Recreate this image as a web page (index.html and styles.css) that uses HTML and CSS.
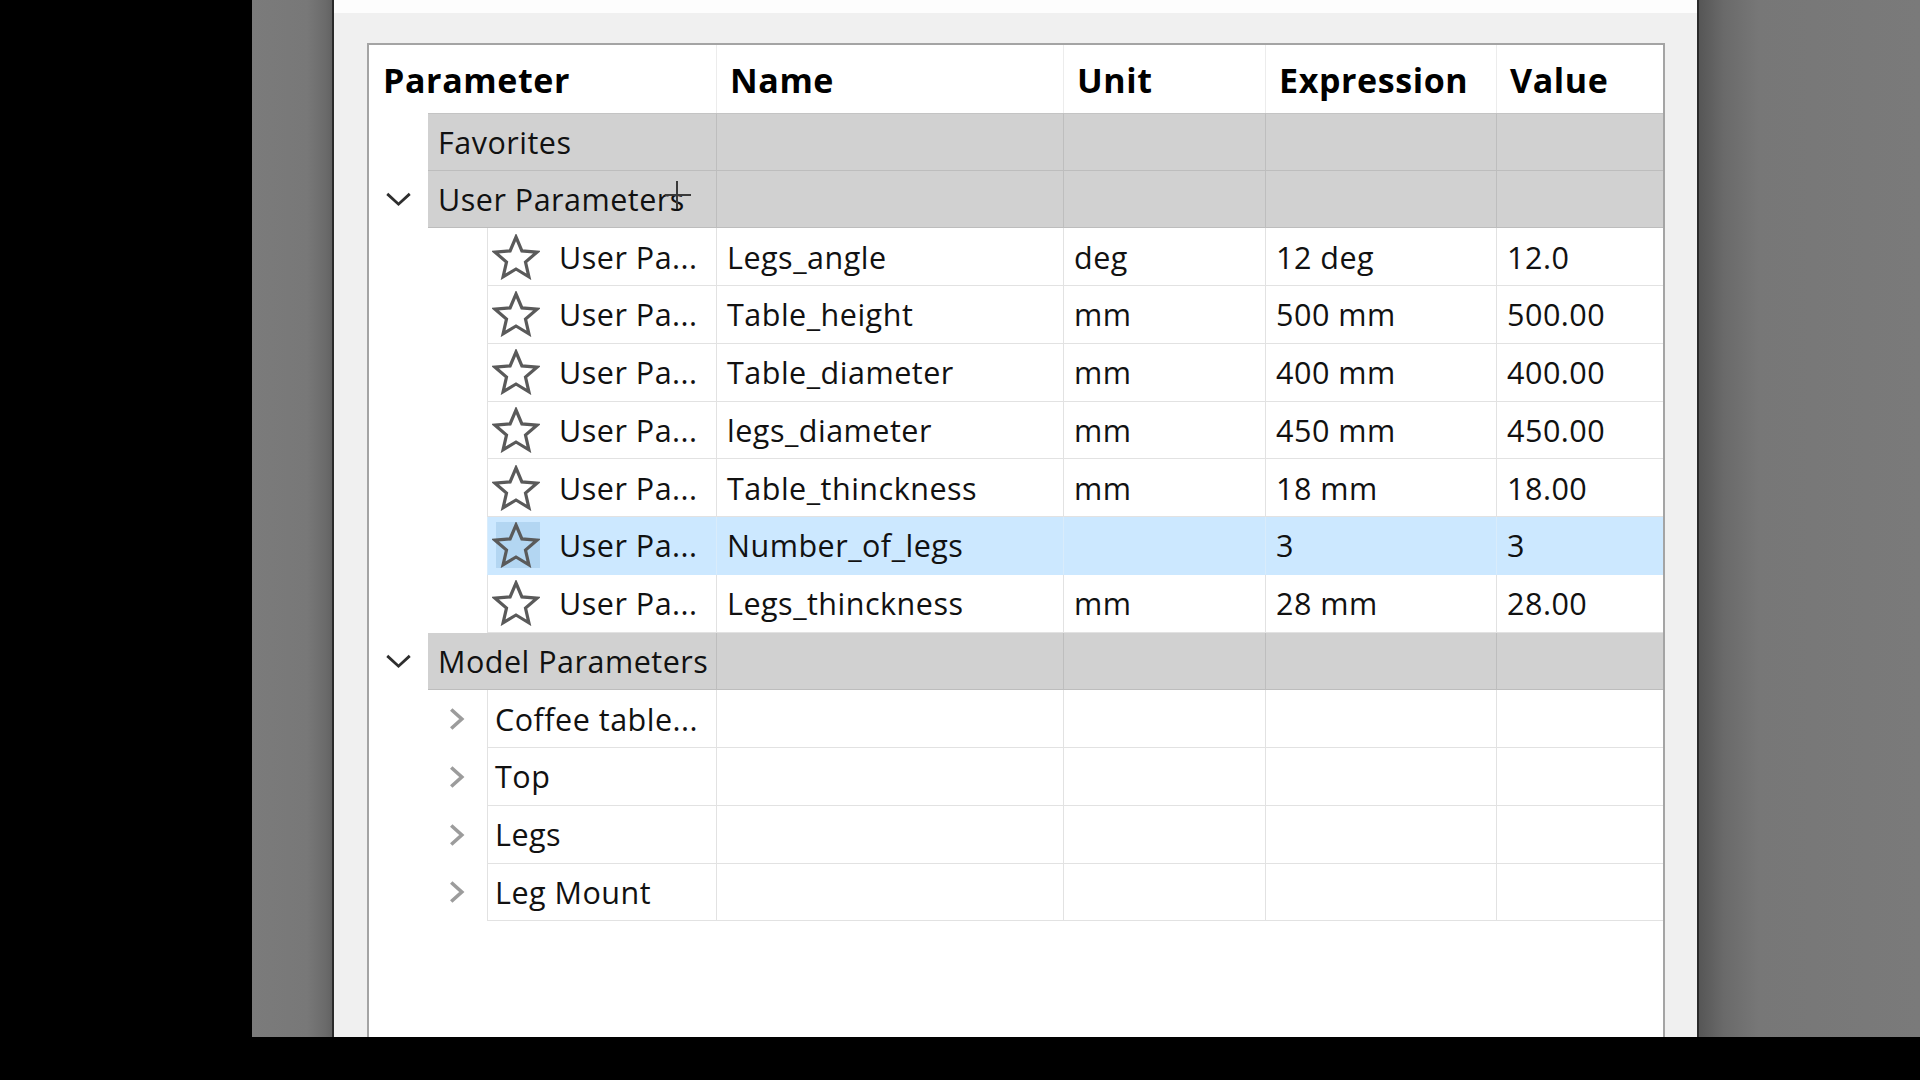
FILE: index.html
```html
<!DOCTYPE html>
<html>
<head>
<meta charset="utf-8">
<link rel="stylesheet" href="styles.css">
</head>
<body>
<div class="screen">
  <div class="stage">
    <div class="gutter-left"></div>
    <div class="window">
      <div class="topband"></div>
      <div class="content">
        <div class="table">
          <div class="row head">
            <div class="cell hc">Parameter</div>
            <div class="cell hc">Name</div>
            <div class="cell hc">Unit</div>
            <div class="cell hc">Expression</div>
            <div class="cell hc">Value</div>
          </div>

          <div class="row group first">
            <div class="tree"><div class="indent-g"></div><div class="glabel">Favorites</div></div>
            <div class="cell g"></div><div class="cell g"></div><div class="cell g"></div><div class="cell g"></div>
          </div>

          <div class="row group">
            <div class="tree">
              <div class="indent-g">
                <svg class="chev-down" viewBox="0 0 28 16"><path d="M2 2 L14 13 L26 2" /></svg>
              </div>
              <div class="glabel">User Parameters<span class="cursor"><span class="cv"></span><span class="ch"></span></span></div>
            </div>
            <div class="cell g"></div><div class="cell g"></div><div class="cell g"></div><div class="cell g"></div>
          </div>

          <div class="row item">
            <div class="tree"><div class="indent-c"></div><div class="clabel"><span class="starbox"><svg class="star" viewBox="0 0 48 46"><polygon points="24,3 29.9,16.9 44.9,18.2 33.5,28.1 36.9,42.8 24,35 11.1,42.8 14.5,28.1 3.1,18.2 18.1,16.9"/></svg></span><span class="ctext">User Pa...</span></div></div>
            <div class="cell">Legs_angle</div><div class="cell">deg</div><div class="cell">12 deg</div><div class="cell">12.0</div>
          </div>
          <div class="row item">
            <div class="tree"><div class="indent-c"></div><div class="clabel"><span class="starbox"><svg class="star" viewBox="0 0 48 46"><polygon points="24,3 29.9,16.9 44.9,18.2 33.5,28.1 36.9,42.8 24,35 11.1,42.8 14.5,28.1 3.1,18.2 18.1,16.9"/></svg></span><span class="ctext">User Pa...</span></div></div>
            <div class="cell">Table_height</div><div class="cell">mm</div><div class="cell">500 mm</div><div class="cell">500.00</div>
          </div>
          <div class="row item">
            <div class="tree"><div class="indent-c"></div><div class="clabel"><span class="starbox"><svg class="star" viewBox="0 0 48 46"><polygon points="24,3 29.9,16.9 44.9,18.2 33.5,28.1 36.9,42.8 24,35 11.1,42.8 14.5,28.1 3.1,18.2 18.1,16.9"/></svg></span><span class="ctext">User Pa...</span></div></div>
            <div class="cell">Table_diameter</div><div class="cell">mm</div><div class="cell">400 mm</div><div class="cell">400.00</div>
          </div>
          <div class="row item">
            <div class="tree"><div class="indent-c"></div><div class="clabel"><span class="starbox"><svg class="star" viewBox="0 0 48 46"><polygon points="24,3 29.9,16.9 44.9,18.2 33.5,28.1 36.9,42.8 24,35 11.1,42.8 14.5,28.1 3.1,18.2 18.1,16.9"/></svg></span><span class="ctext">User Pa...</span></div></div>
            <div class="cell">legs_diameter</div><div class="cell">mm</div><div class="cell">450 mm</div><div class="cell">450.00</div>
          </div>
          <div class="row item">
            <div class="tree"><div class="indent-c"></div><div class="clabel"><span class="starbox"><svg class="star" viewBox="0 0 48 46"><polygon points="24,3 29.9,16.9 44.9,18.2 33.5,28.1 36.9,42.8 24,35 11.1,42.8 14.5,28.1 3.1,18.2 18.1,16.9"/></svg></span><span class="ctext">User Pa...</span></div></div>
            <div class="cell">Table_thinckness</div><div class="cell">mm</div><div class="cell">18 mm</div><div class="cell">18.00</div>
          </div>
          <div class="row item selected">
            <div class="tree"><div class="indent-c"></div><div class="clabel"><span class="starbox hl"><svg class="star" viewBox="0 0 48 46"><polygon points="24,3 29.9,16.9 44.9,18.2 33.5,28.1 36.9,42.8 24,35 11.1,42.8 14.5,28.1 3.1,18.2 18.1,16.9"/></svg></span><span class="ctext">User Pa...</span></div></div>
            <div class="cell">Number_of_legs</div><div class="cell"></div><div class="cell">3</div><div class="cell">3</div>
          </div>
          <div class="row item">
            <div class="tree"><div class="indent-c"></div><div class="clabel"><span class="starbox"><svg class="star" viewBox="0 0 48 46"><polygon points="24,3 29.9,16.9 44.9,18.2 33.5,28.1 36.9,42.8 24,35 11.1,42.8 14.5,28.1 3.1,18.2 18.1,16.9"/></svg></span><span class="ctext">User Pa...</span></div></div>
            <div class="cell">Legs_thinckness</div><div class="cell">mm</div><div class="cell">28 mm</div><div class="cell">28.00</div>
          </div>

          <div class="row group">
            <div class="tree">
              <div class="indent-g">
                <svg class="chev-down" viewBox="0 0 28 16"><path d="M2 2 L14 13 L26 2" /></svg>
              </div>
              <div class="glabel">Model Parameters</div>
            </div>
            <div class="cell g"></div><div class="cell g"></div><div class="cell g"></div><div class="cell g"></div>
          </div>

          <div class="row item">
            <div class="tree"><div class="indent-m"><svg class="chev-right" viewBox="0 0 18 22"><path d="M4 2 L14 11 L4 20" /></svg></div><div class="clabel mlabel">Coffee table...</div></div>
            <div class="cell"></div><div class="cell"></div><div class="cell"></div><div class="cell"></div>
          </div>
          <div class="row item">
            <div class="tree"><div class="indent-m"><svg class="chev-right" viewBox="0 0 18 22"><path d="M4 2 L14 11 L4 20" /></svg></div><div class="clabel mlabel">Top</div></div>
            <div class="cell"></div><div class="cell"></div><div class="cell"></div><div class="cell"></div>
          </div>
          <div class="row item">
            <div class="tree"><div class="indent-m"><svg class="chev-right" viewBox="0 0 18 22"><path d="M4 2 L14 11 L4 20" /></svg></div><div class="clabel mlabel">Legs</div></div>
            <div class="cell"></div><div class="cell"></div><div class="cell"></div><div class="cell"></div>
          </div>
          <div class="row item">
            <div class="tree"><div class="indent-m"><svg class="chev-right" viewBox="0 0 18 22"><path d="M4 2 L14 11 L4 20" /></svg></div><div class="clabel mlabel">Leg Mount</div></div>
            <div class="cell"></div><div class="cell"></div><div class="cell"></div><div class="cell"></div>
          </div>
        </div>
      </div>
    </div>
    <div class="gutter-right"></div>
  </div>
  <div class="bottombar"></div>
</div>
</body>
</html>
```

FILE: styles.css
```css
html, body {
  margin: 0;
  padding: 0;
  background: #000;
  width: 1920px;
  height: 1080px;
  overflow: hidden;
}

.screen {
  width: 1920px;
  height: 1080px;
  display: flex;
  flex-direction: column;
  font-family: "Open Sans", "Noto Sans", sans-serif;
  color: #111;
}

.stage {
  display: flex;
  height: 1037px;
  padding-left: 252px;
}

.bottombar {
  flex: 1;
  background: #000;
}

.gutter-left {
  width: 80px;
  background: linear-gradient(to right, #7b7b7b 0, #787878 55px, #6a6a6a 74px, #626262 80px);
}

.gutter-right {
  flex: 1;
  background: linear-gradient(to right, #565656 0, #6a6a6a 25px, #777777 60px, #7a7a7a 100%);
}

.window {
  width: 1367px;
  box-sizing: border-box;
  border-left: 2px solid #2a2a2a;
  border-right: 2px solid #2a2a2a;
  background: #f0f0f0;
  display: flex;
  flex-direction: column;
  overflow: hidden;
}

.topband {
  height: 13px;
  background: #fdfdfd;
  flex: none;
}

.content {
  flex: 1;
  min-height: 0;
  padding: 30px 32px 0 33px;
}

.table {
  height: 1100px;
  border: 2px solid #a4a4a4;
  background: #fff;
}

.row {
  display: grid;
  grid-template-columns: 347px 347px 202px 231px 167px;
  height: 57.75px;
  box-sizing: border-box;
}

.row.head {
  height: 67.75px;
}

.cell {
  display: flex;
  align-items: center;
  padding-left: 10px;
  font-size: 30.5px;
  letter-spacing: 0.5px;
  border-left: 1px solid #e2e2e2;
  border-bottom: 1px solid #e2e2e2;
  box-sizing: border-box;
  white-space: nowrap;
  overflow: hidden;
}

.row .cell:first-child {
  border-left: none;
}

.hc {
  font-weight: 700;
  font-size: 34px;
  letter-spacing: 0.6px;
  padding-left: 13px;
  color: #000;
  border-bottom: none;
  border-left-color: #ececec;
  padding-top: 3px;
}

.row.head .hc:first-child {
  padding-left: 14px;
}

.tree {
  display: flex;
  height: 100%;
  font-size: 30.5px;
  letter-spacing: 0.5px;
}

.indent-g {
  width: 59px;
  flex: none;
  display: flex;
  align-items: center;
  justify-content: center;
}

.indent-c {
  width: 118px;
  flex: none;
}

.indent-m {
  width: 118px;
  flex: none;
  display: flex;
  align-items: center;
  justify-content: flex-end;
  padding-right: 21px;
  box-sizing: border-box;
}

.glabel {
  flex: 1;
  display: flex;
  align-items: center;
  padding-left: 10px;
  background: #d1d1d1;
  border-bottom: 1px solid #bdbdbd;
  position: relative;
  white-space: nowrap;
}

.row.first .glabel,
.row.first .cell.g {
  border-top: 1px solid #c4c4c4;
}

.cell.g {
  background: #d1d1d1;
  border-left-color: #bebebe;
  border-bottom-color: #bdbdbd;
}

.clabel {
  flex: 1;
  display: flex;
  align-items: center;
  border-left: 1px solid #e2e2e2;
  border-bottom: 1px solid #e2e2e2;
  padding-left: 4px;
  white-space: nowrap;
}

.mlabel {
  padding-left: 7px;
}

.starbox {
  width: 48px;
  height: 46px;
  display: flex;
  align-items: center;
  justify-content: center;
  flex: none;
}

.starbox.hl {
  background: linear-gradient(to right, transparent 0, transparent 4px, #b3d6f2 4px);
}

.star {
  width: 48px;
  height: 46px;
}

.star polygon {
  fill: none;
  stroke: #5a5a5a;
  stroke-width: 3.2;
  stroke-linejoin: miter;
}

.ctext {
  margin-left: 19px;
}

.chev-down {
  width: 27px;
  height: 15px;
  margin-right: 1px;
}

.chev-down path {
  fill: none;
  stroke: #2e2e2e;
  stroke-width: 3;
}

.chev-right {
  width: 19px;
  height: 24px;
}

.chev-right path {
  fill: none;
  stroke: #9c9c9c;
  stroke-width: 3.4;
}

.row.selected .clabel,
.row.selected .cell {
  background: #cce8ff;
  border-left-color: #d9ecfb;
  border-bottom-color: #cce8ff;
}

.cursor {
  position: absolute;
  left: 237px;
  top: 10px;
  width: 26px;
  height: 28px;
}

.cursor .cv {
  position: absolute;
  left: 11px;
  top: 0;
  width: 2px;
  height: 28px;
  background: #3a3a3a;
}

.cursor .ch {
  position: absolute;
  left: 0;
  top: 13px;
  width: 26px;
  height: 2px;
  background: #3a3a3a;
}
```
